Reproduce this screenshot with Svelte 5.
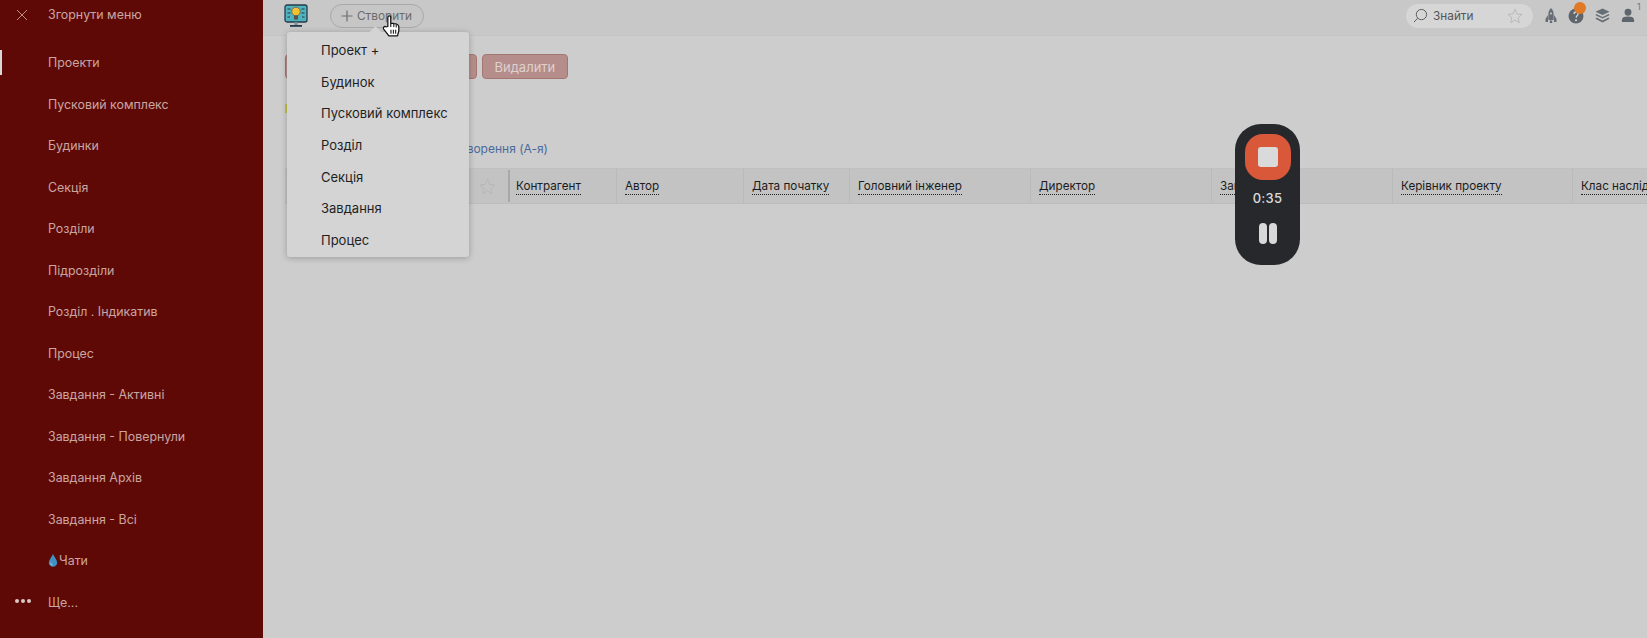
<script>
  const navItems = [
    'Проекти',
    'Пусковий комплекс',
    'Будинки',
    'Секція',
    'Розділи',
    'Підрозділи',
    'Розділ . Індикатив',
    'Процес',
    'Завдання - Активні',
    'Завдання - Повернули',
    'Завдання Архів',
    'Завдання - Всі',
  ];
  const createItems = ['Проект +', 'Будинок', 'Пусковий комплекс', 'Розділ', 'Секція', 'Завдання', 'Процес'];
  const columns = [
    { label: 'Контрагент', width: 107 },
    { label: 'Автор', width: 127 },
    { label: 'Дата початку', width: 106 },
    { label: 'Головний інженер', width: 181 },
    { label: 'Директор', width: 181 },
    { label: 'Завідувач', width: 181 },
    { label: 'Керівник проекту', width: 180 },
    { label: 'Клас наслідків', width: 150 },
  ];
</script>

<div class="page">
  <aside class="sidebar">
    <div class="collapse">
      <svg class="close" viewBox="0 0 12 12" width="12" height="12">
        <path d="M1 1l10 10M11 1L1 11" stroke="#b98f8a" stroke-width="1" fill="none" />
      </svg>
      <span>Згорнути меню</span>
    </div>
    <nav>
      {#each navItems as item, i}
        <div class="nav-item" class:active={i === 0}>{item}</div>
      {/each}
      <div class="nav-item chat">
        <svg viewBox="0 0 10 14" width="10" height="13">
          <path d="M5 0C6 3 9.500 6 9.500 9.300A4.500 4.500 0 0 1 .5 9.300C.5 6 4 3 5 0z" fill="#3f93c4" />
          <path d="M2.500 9.500A2.500 2.500 0 0 0 4.500 12" stroke="#a9d6ec" fill="none" />
        </svg>Чати
      </div>
      <div class="nav-item more">
        <span class="dots"><i></i><i></i><i></i></span>
        Ще...
      </div>
    </nav>
  </aside>

  <main class="content">
    <header class="topbar">
      <svg class="logo" viewBox="0 0 24 24" width="24" height="24">
        <rect x="1" y="1" width="22" height="17" rx="2" fill="#4fb3bd" stroke="#243b4a" stroke-width="1.300" />
        <rect x="6" y="21" width="12" height="1.800" fill="#243b4a" />
        <rect x="10.500" y="18" width="3" height="3" fill="#7b8b93" />
        <circle cx="12" cy="7.500" r="4.300" fill="#f2c230" stroke="#5a5246" stroke-width=".7" />
        <rect x="10" y="11.500" width="4" height="4" fill="#5a5246" />
        <path d="M3.500 5h3M3.500 9h3M3.500 13h2.500M17.500 5h3M17.500 9h3M18 13h2.500" stroke="#243b4a" stroke-width="1" />
      </svg>
      <button class="create">
        <svg viewBox="0 0 12 12" width="12" height="12"><path d="M6 .5v11M.5 6h11" stroke="#6f6f6f" stroke-width="1.200" /></svg>
        Створити
      </button>
      <div class="spacer"></div>
      <div class="search">
        <svg viewBox="0 0 16 16" width="15" height="15">
          <circle cx="9" cy="7" r="5.500" stroke="#555" stroke-width="1" fill="none" />
          <path d="M5 11l-4 4" stroke="#555" stroke-width="1" />
        </svg>
        <span>Знайти</span>
        <svg class="search-star" viewBox="0 0 24 24" width="16" height="16">
          <path d="M12 2l3 7 7.500.7-5.700 5 1.700 7.300L12 18l-6.500 4 1.700-7.300-5.700-5L9 9z" fill="none" stroke="#b5b5b5" stroke-width="1.300" />
        </svg>
      </div>
      <div class="icons">
        <svg viewBox="0 0 12 15" width="12" height="15">
          <path d="M6 0c2 1.800 2.600 4 2.600 6.500V12H3.400V6.500C3.400 4 4 1.800 6 0z" fill="#666d74" />
          <circle cx="6" cy="5.500" r="1" fill="#cfcfcf" />
          <path d="M3 7L.5 11v3H3zM9 7l2.500 4v3H9zM4.800 12.500h2.400V15H4.800z" fill="#666d74" />
        </svg>
        <span class="help">
          <svg viewBox="0 0 16 16" width="16" height="16">
            <circle cx="8" cy="8" r="7.500" fill="#5e656c" />
            <circle cx="8" cy="12.300" r="1" fill="#ddd" />
            <path d="M6 6a2 2 0 1 1 3 1.700L8 9.500" stroke="#ddd" stroke-width="1.300" fill="none" />
          </svg>
          <i class="badge"></i>
        </span>
        <svg viewBox="0 0 16 16" width="15" height="15">
          <path d="M8 .5l7.500 3.500L8 7.500.5 4z" fill="#666d74" />
          <path d="M1.500 6.500L8 9.500l6.500-3 1 1.300L8 11.300.5 7.800zM1.500 10.200L8 13.200l6.500-3 1 1.300L8 15.500.5 11.500z" fill="#666d74" />
        </svg>
        <span class="user">
          <svg viewBox="0 0 16 16" width="14" height="15">
            <circle cx="8" cy="4.300" r="3.900" fill="#5e656c" />
            <path d="M1 15.500v-2.500c0-2.500 2.500-3.800 7-3.800s7 1.300 7 3.800v2.500z" fill="#5e656c" />
          </svg>
          <sup>1</sup>
        </span>
      </div>
    </header>

    <div class="body">
      <div class="actions">
        <button class="danger first">Додати</button>
        <button class="danger">Видалити</button>
      </div>
      <div class="marker"></div>
      <div class="sort">Сортування: дата створення (А-я)</div>
      <div class="table-head">
        <div class="head-first">
          <svg viewBox="0 0 24 24" width="17" height="17">
            <path d="M12 2l3 7 7.500.7-5.700 5 1.700 7.300L12 18l-6.500 4 1.700-7.300-5.700-5L9 9z" fill="none" stroke="#b5b5b5" stroke-width="1.200" />
          </svg>
        </div>
        {#each columns as col}
          <div class="head-cell" style="width: {col.width}px"><span>{col.label}</span></div>
        {/each}
      </div>
    </div>
  </main>

  <div class="create-menu">
    {#each createItems as item}
      <div class="menu-item">{item}</div>
    {/each}
  </div>

  <svg class="cursor" viewBox="0 0 18 22" width="19" height="23">
    <path d="M5.500 11V2.200a1.400 1.400 0 0 1 2.800 0V8.200l1.500-.3 1.700.4 1.600.1 1.600.7c1 .5 1.300 1.300 1.300 2.300v3.800l-1.300 4.800H6.500L1.500 13.500c-1-1.500.8-3.200 2.200-2.200z" fill="#fff" stroke="#111" stroke-width="1.200" stroke-linejoin="round" />
    <path d="M8.300 8.500v3M11.200 8.500v3M13.500 9v3M8.500 14v4M10.800 14v4M13 14v4" stroke="#111" stroke-width="1" />
  </svg>

  <div class="recorder">
    <div class="stop"><i></i></div>
    <div class="time">0:35</div>
    <div class="pause"><i></i><i></i></div>
  </div>
</div>

<style>
  :global(body) { margin: 0; }
  .page {
    position: relative; display: flex; width: 1647px; height: 638px; overflow: hidden;
    font-family: Inter, "Liberation Sans", sans-serif;
    background: #cdcdcd;
  }
  .sidebar {
    width: 263px; flex-shrink: 0; background: #5f0906; color: #c9a6a2;
    font-size: 12.400px; box-sizing: border-box;
  }
  .collapse { display: flex; align-items: center; height: 29px; padding-left: 16px; }
  .collapse span { margin-left: 20px; }
  nav { padding-top: 13px; }
  .nav-item {
    position: relative; height: 41.500px; display: flex; align-items: center; padding-left: 48px;
  }
  .nav-item.active::before {
    content: ''; position: absolute; left: 0; top: 8px; width: 2px; height: 25px; background: #d8d8d8;
  }
  .chat svg { margin-right: 1px; }
  .more { padding-left: 15px; }
  .dots { display: flex; gap: 2px; margin-right: 17px; margin-top: -3px; }
  .dots i { width: 4px; height: 4px; border-radius: 50%; background: #d8c8c6; }

  .content { flex: 1; min-width: 0; }
  .topbar {
    display: flex; align-items: center; height: 36px; padding: 0 0 4px 21px; box-sizing: border-box;
    background: #c8c8c8; border-bottom: 1px solid #c4c4c4;
  }
  .logo { flex-shrink: 0; }
  .create {
    display: flex; align-items: center; gap: 4px; margin-left: 22px; height: 24px; width: 94px; padding: 0 10px;
    box-sizing: border-box; border: 1px solid #a9a9a9; border-radius: 12px; background: #c6c6c6;
    color: #6b6b6b; font: inherit; font-size: 11.800px;
  }
  .spacer { flex: 1; }
  .search {
    display: flex; align-items: center; width: 127px; height: 24px; padding: 0 10px 0 7px; box-sizing: border-box;
    border-radius: 12px; background: #d6d6d6; color: #555; font-size: 11.800px; gap: 5px;
  }
  .search-star { margin-left: auto; }
  .icons { display: flex; align-items: center; gap: 11px; width: 114px; padding-left: 12px; box-sizing: border-box; }
  .help, .user { position: relative; display: flex; }
  .badge {
    position: absolute; right: -2px; top: -6px; width: 12px; height: 12px; border-radius: 50%; background: #e07a26;
  }
  .user sup { position: absolute; left: 16px; top: -6px; font-size: 9px; color: #777; line-height: 1; }

  .body { padding: 0 0 0 22px; }
  .actions { display: flex; gap: 5px; padding-top: 18px; }
  .danger {
    height: 25px; padding: 0 11.500px; border: 1px solid #a47672; border-radius: 4px; background: #b58e8b;
    color: #dfd0ce; font: inherit; font-size: 13px;
  }
  .danger.first { width: 192px; }
  .marker { width: 4px; height: 9px; margin-top: 25px; background: #c2c23f; }
  .sort { margin-top: 28px; font-size: 12px; color: #4a6a9c; padding-left: 62px; height: 16px; white-space: nowrap; }
  .table-head {
    display: flex; height: 36px; margin-top: 11px; width: 1400px;
    background: #c3c3c3; border-top: 1px solid #c0c0c0; border-bottom: 1px solid #bdbdbd;
    box-sizing: border-box;
  }
  .head-first {
    width: 225px; flex-shrink: 0; display: flex; align-items: center; justify-content: flex-end;
    padding-right: 12px; box-sizing: border-box; border-right: 2px solid #a8a8a8; margin: 1px 0;
  }
  .head-cell {
    flex-shrink: 0; display: flex; align-items: center; padding: 2px 0 0 8px; box-sizing: border-box;
    border-right: 1px solid #bababa; font-size: 11.700px; color: #1c1c1c; white-space: nowrap; overflow: hidden;
  }
  .head-first + .head-cell { padding-left: 6px; }
  .head-cell span { border-bottom: 1px dotted #222; line-height: 15px; }

  .create-menu {
    position: absolute; left: 287px; top: 32px; width: 182px; height: 225px; padding: 2px 0; box-sizing: border-box;
    background: #d4d4d4; border-radius: 3px; box-shadow: 0 1px 6px rgba(0,0,0,.25);
  }
  .create-menu::before {
    content: ''; position: absolute; left: 84px; top: -4px; width: 9px; height: 9px; background: #d4d4d4; transform: rotate(45deg);
  }
  .menu-item {
    position: relative; height: 31.600px; display: flex; align-items: center; padding-left: 34px; font-size: 13px; color: #1f1f1f;
    top: .5px;
  }
  .cursor { position: absolute; left: 382px; top: 15px; }

  .recorder {
    position: absolute; left: 1235px; top: 124px; width: 65px; height: 141px; box-sizing: border-box;
    display: flex; flex-direction: column; align-items: center;
    background: #26282c; border-radius: 26px; padding-top: 10px;
  }
  .stop {
    width: 46px; height: 46px; border-radius: 18px; background: #d9583a;
    display: flex; align-items: center; justify-content: center;
  }
  .stop i { width: 20px; height: 20px; border-radius: 3px; background: #dadada; }
  .time { margin-top: 10px; color: #dcdcdc; font-size: 13px; font-weight: 500; letter-spacing: .3px; }
  .pause { display: flex; gap: 2px; margin-top: 17px; }
  .pause i { width: 8px; height: 21px; border-radius: 4px; background: #d8d8d8; }
</style>
